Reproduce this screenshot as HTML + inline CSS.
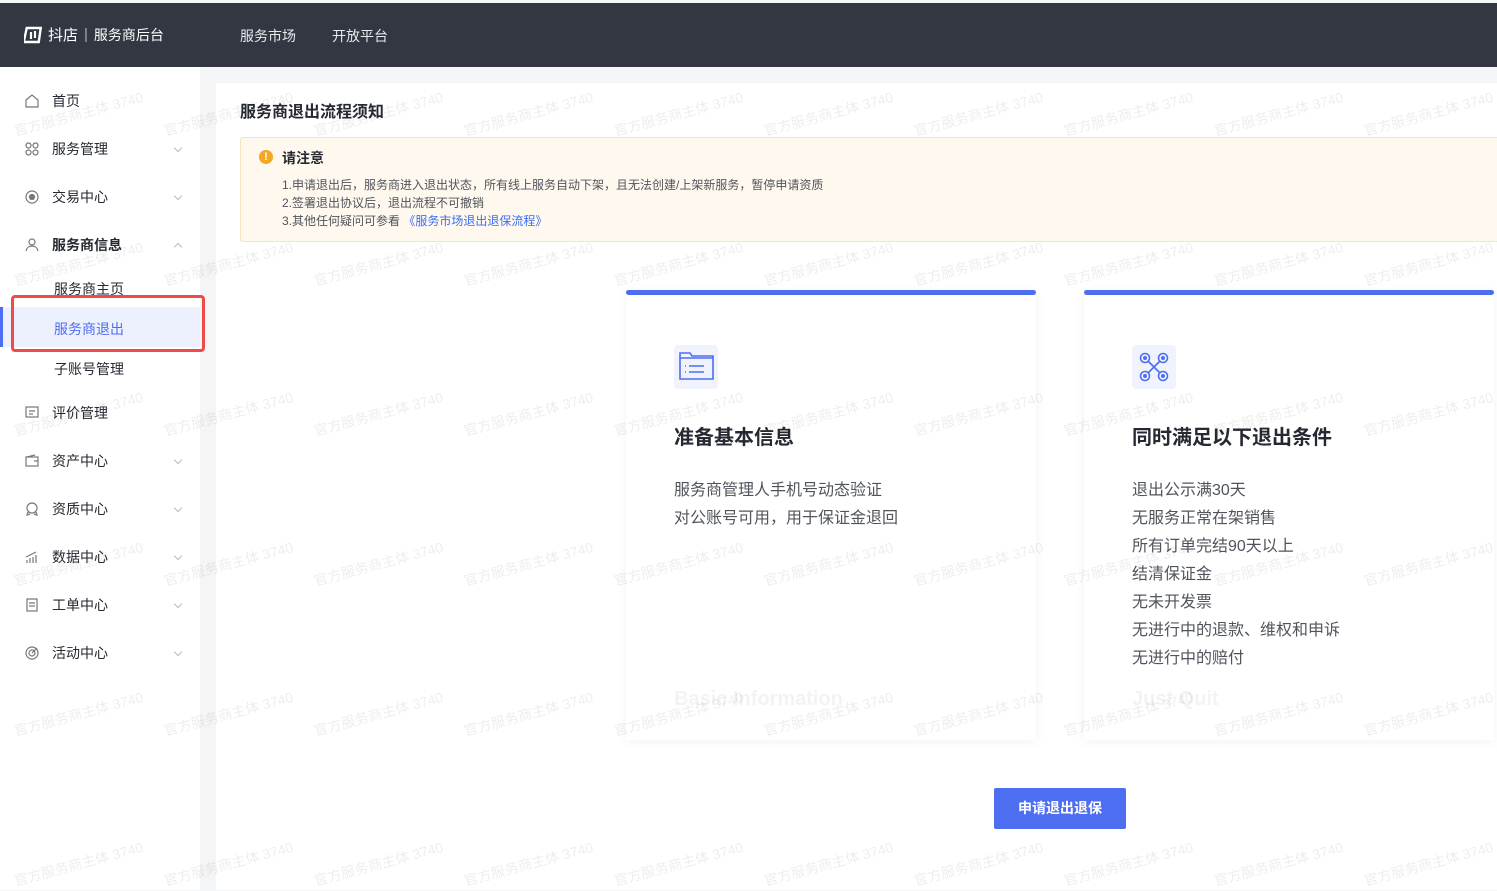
<!DOCTYPE html>
<html><head><meta charset="utf-8">
<style>
*{margin:0;padding:0;box-sizing:border-box}
body{width:1497px;height:890px;overflow:hidden;background:#f4f5f7;font-family:"Liberation Sans","Noto Sans CJK SC",sans-serif;position:relative;color:#252931}
.top{position:absolute;left:0;top:3px;width:1497px;height:64px;background:#323741;color:#fff}
.top .logo{position:absolute;left:24px;top:21px;font-size:15px;display:flex;align-items:center}
.top .nav{position:absolute;top:23px;font-size:14px;color:#e8e9eb}
.side{position:absolute;left:0;top:67px;width:200px;height:823px;background:#fff}
.mi{position:absolute;left:24px;font-size:14px;color:#252931;display:flex;align-items:center}
.mi svg{width:16px;height:16px;margin-right:12px}
.arr{position:absolute;left:175px;width:6px;height:6px;border-right:1px solid #bbb;border-bottom:1px solid #bbb;transform:rotate(45deg)}
.sub{position:absolute;left:54px;font-size:14px;color:#252931}
.main{position:absolute;left:216px;top:83px;width:1281px;height:807px;background:#fff}
.card{position:absolute;top:290px;width:410px;height:450px;background:#fff;box-shadow:0 2px 10px rgba(0,0,0,0.05)}
.card .bar{height:5px;background:#4e6ef2;border-radius:3px}
.card .ic{position:absolute;left:48px;top:55px;width:44px;height:44px;background:#f0f3fd;border-radius:4px}
.card h3{position:absolute;left:48px;top:131px;font-size:20px;font-weight:bold;color:#252931}
.card .ls{position:absolute;left:48px;top:187px;font-size:16px;line-height:28px;color:#50545c}
.card .en{position:absolute;left:48px;top:398px;font-size:20px;font-weight:bold;color:#f2f3f5}
.wm{position:absolute;font-size:14px;color:rgba(0,0,0,0.07);transform:rotate(-15deg);white-space:nowrap;pointer-events:none}
</style></head><body>
<div class="top">
 <div class="logo"><svg width="20" height="18" viewBox="0 0 20 18"><path d="M3 2h14v14H2z" fill="none" stroke="#fff" stroke-width="2.4" transform="skewX(-8)"/><path d="M7 6v7M11 5v7" stroke="#fff" stroke-width="2.2"/></svg><span style="margin-left:4px">抖店</span><span style="margin:0 6px;color:#aaa">|</span><span style="font-size:14px">服务商后台</span></div>
 <div class="nav" style="left:240px">服务市场</div>
 <div class="nav" style="left:332px">开放平台</div>
</div>
<div class="side">
 <div class="mi" style="top:24px"><svg viewBox="0 0 16 16"><path d="M2 7l6-5 6 5v7H2z" fill="none" stroke="#777" stroke-width="1.2"/></svg>首页</div>
 <div class="mi" style="top:72px"><svg viewBox="0 0 16 16" fill="none" stroke="#777" stroke-width="1.2"><circle cx="4.5" cy="4.5" r="2.5"/><circle cx="11.5" cy="4.5" r="2.5"/><circle cx="4.5" cy="11.5" r="2.5"/><circle cx="11.5" cy="11.5" r="2.5"/></svg>服务管理</div><div class="arr" style="top:78px"></div>
 <div class="mi" style="top:120px"><svg viewBox="0 0 16 16" fill="none" stroke="#777" stroke-width="1.2"><circle cx="8" cy="8" r="6"/><circle cx="8" cy="8" r="2.5" fill="#777"/></svg>交易中心</div><div class="arr" style="top:126px"></div>
 <div class="mi" style="top:168px;font-weight:bold"><svg viewBox="0 0 16 16" fill="none" stroke="#777" stroke-width="1.2"><circle cx="8" cy="5" r="3"/><path d="M2 14c1-4 3-5 6-5s5 1 6 5"/></svg>服务商信息</div><div class="arr" style="top:177px;transform:rotate(225deg)"></div>
 <div class="sub" style="top:212px">服务商主页</div>
 <div style="position:absolute;left:0;top:240px;width:200px;height:40px;background:#edf1fd"></div>
 <div style="position:absolute;left:0;top:240px;width:3px;height:40px;background:#4e6ef2"></div>
 <div class="sub" style="top:252px;color:#4e6ef2">服务商退出</div>
 <div style="position:absolute;left:11px;top:228px;width:194px;height:57px;border:3px solid #ef4b4b;border-radius:4px"></div>
 <div class="sub" style="top:292px">子账号管理</div>
 <div class="mi" style="top:336px"><svg viewBox="0 0 16 16" fill="none" stroke="#777" stroke-width="1.2"><rect x="2" y="2" width="12" height="10"/><path d="M5 6h6M5 9h4"/></svg>评价管理</div>
 <div class="mi" style="top:384px"><svg viewBox="0 0 16 16" fill="none" stroke="#777" stroke-width="1.2"><rect x="2" y="4" width="12" height="9"/><path d="M3 4l8-2M10 8h4"/></svg>资产中心</div><div class="arr" style="top:390px"></div>
 <div class="mi" style="top:432px"><svg viewBox="0 0 16 16" fill="none" stroke="#777" stroke-width="1.2"><circle cx="8" cy="7" r="5"/><path d="M4 11l-1 3 3-1M12 11l1 3-3-1"/></svg>资质中心</div><div class="arr" style="top:438px"></div>
 <div class="mi" style="top:480px"><svg viewBox="0 0 16 16" fill="none" stroke="#777" stroke-width="1.2"><path d="M3 14v-3M6 14v-5M9 14v-6M12 14V6M2 8l10-5"/></svg>数据中心</div><div class="arr" style="top:486px"></div>
 <div class="mi" style="top:528px"><svg viewBox="0 0 16 16" fill="none" stroke="#777" stroke-width="1.2"><rect x="3" y="2" width="10" height="12"/><path d="M5 6h6M5 9h6"/></svg>工单中心</div><div class="arr" style="top:534px"></div>
 <div class="mi" style="top:576px"><svg viewBox="0 0 16 16" fill="none" stroke="#777" stroke-width="1.2"><circle cx="8" cy="8" r="6"/><circle cx="8" cy="8" r="3"/><path d="M8 8l5-5"/></svg>活动中心</div><div class="arr" style="top:582px"></div>
</div>
<div class="main">
 <div style="position:absolute;left:24px;top:15px;font-size:16px;font-weight:bold">服务商退出流程须知</div>
 <div style="position:absolute;left:24px;top:54px;width:1260px;height:105px;background:#fff8ee;border:1px solid #fbe2bd;border-radius:3px">
  <div style="position:absolute;left:18px;top:12px;width:14px;height:14px;border-radius:50%;background:#f5a623;color:#fff;font-size:11px;font-weight:bold;text-align:center;line-height:14px">!</div>
  <div style="position:absolute;left:41px;top:10px;font-size:14px;font-weight:bold">请注意</div>
  <div style="position:absolute;left:41px;top:38px;font-size:12px;line-height:18px;color:#50545c">1.申请退出后，服务商进入退出状态，所有线上服务自动下架，且无法创建/上架新服务，暂停申请资质<br>2.签署退出协议后，退出流程不可撤销<br>3.其他任何疑问可参看 <span style="color:#3a6ef2">《服务市场退出退保流程》</span></div>
 </div>
</div>
<div class="card" style="left:626px">
 <div class="bar"></div>
 <div class="ic"><svg width="44" height="44" viewBox="0 0 44 44" fill="none" stroke="#4e6ef2" stroke-width="1.6"><path d="M6 8h10l2 3h21v23H6z"/><path d="M6 13h33"/><path d="M11 21h1M15 21h15M11 27h1M15 27h15"/></svg></div>
 <h3>准备基本信息</h3>
 <div class="ls">服务商管理人手机号动态验证<br>对公账号可用，用于保证金退回</div>
 <div class="en">Basic Information</div>
</div>
<div class="card" style="left:1084px">
 <div class="bar"></div>
 <div class="ic"><svg width="44" height="44" viewBox="0 0 44 44" fill="none" stroke="#4e6ef2" stroke-width="1.6"><circle cx="13" cy="13" r="4.5"/><circle cx="31" cy="13" r="4.5"/><circle cx="13" cy="31" r="4.5"/><circle cx="31" cy="31" r="4.5"/><circle cx="13" cy="13" r="1.2" fill="#4e6ef2"/><circle cx="31" cy="13" r="1.2" fill="#4e6ef2"/><circle cx="13" cy="31" r="1.2" fill="#4e6ef2"/><circle cx="31" cy="31" r="1.2" fill="#4e6ef2"/><path d="M16 16l12 12M28 16L16 28"/></svg></div>
 <h3>同时满足以下退出条件</h3>
 <div class="ls">退出公示满30天<br>无服务正常在架销售<br>所有订单完结90天以上<br>结清保证金<br>无未开发票<br>无进行中的退款、维权和申诉<br>无进行中的赔付</div>
 <div class="en">Just Quit</div>
</div>
<div style="position:absolute;left:994px;top:788px;width:132px;height:41px;background:#4e6ef2;border-radius:2px;color:#fff;font-size:14px;font-weight:bold;text-align:center;line-height:41px">申请退出退保</div>

<div class="wm" style="left:12px;top:104px">官方服务商主体 3740</div><div class="wm" style="left:162px;top:104px">官方服务商主体 3740</div><div class="wm" style="left:312px;top:104px">官方服务商主体 3740</div><div class="wm" style="left:462px;top:104px">官方服务商主体 3740</div><div class="wm" style="left:612px;top:104px">官方服务商主体 3740</div><div class="wm" style="left:762px;top:104px">官方服务商主体 3740</div><div class="wm" style="left:912px;top:104px">官方服务商主体 3740</div><div class="wm" style="left:1062px;top:104px">官方服务商主体 3740</div><div class="wm" style="left:1212px;top:104px">官方服务商主体 3740</div><div class="wm" style="left:1362px;top:104px">官方服务商主体 3740</div>
<div class="wm" style="left:12px;top:254px">官方服务商主体 3740</div><div class="wm" style="left:162px;top:254px">官方服务商主体 3740</div><div class="wm" style="left:312px;top:254px">官方服务商主体 3740</div><div class="wm" style="left:462px;top:254px">官方服务商主体 3740</div><div class="wm" style="left:612px;top:254px">官方服务商主体 3740</div><div class="wm" style="left:762px;top:254px">官方服务商主体 3740</div><div class="wm" style="left:912px;top:254px">官方服务商主体 3740</div><div class="wm" style="left:1062px;top:254px">官方服务商主体 3740</div><div class="wm" style="left:1212px;top:254px">官方服务商主体 3740</div><div class="wm" style="left:1362px;top:254px">官方服务商主体 3740</div>
<div class="wm" style="left:12px;top:404px">官方服务商主体 3740</div><div class="wm" style="left:162px;top:404px">官方服务商主体 3740</div><div class="wm" style="left:312px;top:404px">官方服务商主体 3740</div><div class="wm" style="left:462px;top:404px">官方服务商主体 3740</div><div class="wm" style="left:612px;top:404px">官方服务商主体 3740</div><div class="wm" style="left:762px;top:404px">官方服务商主体 3740</div><div class="wm" style="left:912px;top:404px">官方服务商主体 3740</div><div class="wm" style="left:1062px;top:404px">官方服务商主体 3740</div><div class="wm" style="left:1212px;top:404px">官方服务商主体 3740</div><div class="wm" style="left:1362px;top:404px">官方服务商主体 3740</div>
<div class="wm" style="left:12px;top:554px">官方服务商主体 3740</div><div class="wm" style="left:162px;top:554px">官方服务商主体 3740</div><div class="wm" style="left:312px;top:554px">官方服务商主体 3740</div><div class="wm" style="left:462px;top:554px">官方服务商主体 3740</div><div class="wm" style="left:612px;top:554px">官方服务商主体 3740</div><div class="wm" style="left:762px;top:554px">官方服务商主体 3740</div><div class="wm" style="left:912px;top:554px">官方服务商主体 3740</div><div class="wm" style="left:1062px;top:554px">官方服务商主体 3740</div><div class="wm" style="left:1212px;top:554px">官方服务商主体 3740</div><div class="wm" style="left:1362px;top:554px">官方服务商主体 3740</div>
<div class="wm" style="left:12px;top:704px">官方服务商主体 3740</div><div class="wm" style="left:162px;top:704px">官方服务商主体 3740</div><div class="wm" style="left:312px;top:704px">官方服务商主体 3740</div><div class="wm" style="left:462px;top:704px">官方服务商主体 3740</div><div class="wm" style="left:612px;top:704px">官方服务商主体 3740</div><div class="wm" style="left:762px;top:704px">官方服务商主体 3740</div><div class="wm" style="left:912px;top:704px">官方服务商主体 3740</div><div class="wm" style="left:1062px;top:704px">官方服务商主体 3740</div><div class="wm" style="left:1212px;top:704px">官方服务商主体 3740</div><div class="wm" style="left:1362px;top:704px">官方服务商主体 3740</div>
<div class="wm" style="left:12px;top:854px">官方服务商主体 3740</div><div class="wm" style="left:162px;top:854px">官方服务商主体 3740</div><div class="wm" style="left:312px;top:854px">官方服务商主体 3740</div><div class="wm" style="left:462px;top:854px">官方服务商主体 3740</div><div class="wm" style="left:612px;top:854px">官方服务商主体 3740</div><div class="wm" style="left:762px;top:854px">官方服务商主体 3740</div><div class="wm" style="left:912px;top:854px">官方服务商主体 3740</div><div class="wm" style="left:1062px;top:854px">官方服务商主体 3740</div><div class="wm" style="left:1212px;top:854px">官方服务商主体 3740</div><div class="wm" style="left:1362px;top:854px">官方服务商主体 3740</div>
</body></html>
